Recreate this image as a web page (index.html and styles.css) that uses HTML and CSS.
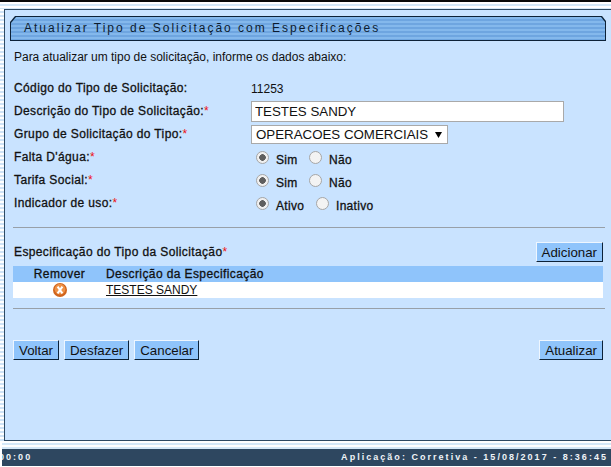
FILE: index.html
```html
<!DOCTYPE html>
<html lang="pt">
<head>
<meta charset="utf-8">
<title>Atualizar Tipo de Solicitação</title>
<link rel="stylesheet" href="styles.css">
</head>
<body>
<div class="topbar"></div>
<div class="stripes-top"></div>
<div class="middle">
  <div class="side"></div>
  <main class="panel">
    <h1 class="title"><span class="title-text">Atualizar Tipo de Solicitação com Especificações</span></h1>
    <p class="intro">Para atualizar um tipo de solicitação, informe os dados abaixo:</p>
    <div class="form">
      <div class="label">Código do Tipo de Solicitação:</div><div class="value">11253</div>
      <div class="label">Descrição do Tipo de Solicitação:<span class="req">*</span></div><div class="value"><input class="text" type="text" value="TESTES SANDY"></div>
      <div class="label">Grupo de Solicitação do Tipo:<span class="req">*</span></div><div class="value"><div class="select">OPERACOES COMERCIAIS<svg class="arrow" width="7" height="6" viewBox="0 0 7 6"><path d="M0 0h7L3.5 6z"/></svg></div></div>
      <div class="label">Falta D'água:<span class="req">*</span></div><div class="value radios"><span class="radio on"></span><span class="opt">Sim</span><span class="radio"></span><span class="opt">Não</span></div>
      <div class="label">Tarifa Social:<span class="req">*</span></div><div class="value radios"><span class="radio on"></span><span class="opt">Sim</span><span class="radio"></span><span class="opt">Não</span></div>
      <div class="label">Indicador de uso:<span class="req">*</span></div><div class="value radios wide"><span class="radio on"></span><span class="opt">Ativo</span><span class="radio"></span><span class="opt">Inativo</span></div>
    </div>
    <hr class="rule first">
    <div class="spec-head">
      <div class="label">Especificação do Tipo da Solicitação<span class="req">*</span></div>
      <button class="btn" type="button">Adicionar</button>
    </div>
    <div class="table">
      <div class="thead"><div class="c1">Remover</div><div class="c2">Descrição da Especificação</div></div>
      <div class="trow">
        <div class="c1"><svg width="14" height="14" viewBox="0 0 14 14"><circle cx="7" cy="7" r="7" fill="#d0641c"/><circle cx="7" cy="6.2" r="5.4" fill="#ee9248"/><path d="M4.6 3.6l4.8 6.8M9.4 3.6l-4.8 6.8" stroke="#fff" stroke-width="2"/></svg></div>
        <div class="c2"><a class="link" href="#">TESTES SANDY</a></div>
      </div>
    </div>
    <hr class="rule second">
    <div class="actions">
      <div class="group"><button class="btn" type="button">Voltar</button><button class="btn" type="button">Desfazer</button><button class="btn" type="button">Cancelar</button></div>
      <button class="btn" type="button">Atualizar</button>
    </div>
  </main>
</div>
<div class="stripes-bottom"></div>
<footer class="footer"><span class="clock">00:00</span><span>Aplicação: Corretiva - 15/08/2017 - 8:36:45</span></footer>
</body>
</html>
```
FILE: styles.css
```css
html, body { margin: 0; padding: 0; }
body {
  width: 611px; height: 467px; overflow: hidden; background: #fff;
  font: 12px "Liberation Sans", Arial, sans-serif; color: #111;
  display: flex; flex-direction: column;
}
.topbar { height: 2px; background: #0a0a0a; flex: none; }
.stripes-top, .stripes-bottom {
  height: 7px; flex: none;
  background: repeating-linear-gradient(#fff 0 2px, #d4e8f8 2px 4px);
}
.stripes-bottom { height: 8px; margin-left: 2px; }
.middle { display: flex; height: 432px; flex: none; }
.side { width: 4px; flex: none; background: repeating-linear-gradient(#fff 0 2px, #cfe3f6 2px 4px); }
.panel {
  flex: 1; background: #c9e3ff; border-left: 1px solid #2e4a63; border-top: 1px solid #2e4a63; border-bottom: 1px solid #2e4a63;
  padding: 6px 5px 0 5px; box-sizing: border-box;
}
.title {
  position: relative; margin: 0; height: 25px; box-sizing: border-box; padding-left: 14px;
  font-weight: 400; font-size: 12px; line-height: 24px; letter-spacing: 2px; color: #0c1c30;
  background: #0d2238;
  clip-path: polygon(5px 0, calc(100% - 4px) 0, 100% 5px, 100% 100%, 0 100%, 0 6px);
}
.title::before {
  content: ""; position: absolute; inset: 1px;
  background: repeating-linear-gradient(#84b8ec 0 2px, #6ea5e0 2px 4px);
  clip-path: polygon(5px 0, calc(100% - 4px) 0, 100% 5px, 100% 100%, 0 100%, 0 6px);
}
.title-text { position: relative; }
.intro { margin: 9px 0 0 4px; line-height: 14px; letter-spacing: -.02px; }
.form {
  display: grid; grid-template-columns: 237px 1fr; grid-auto-rows: 23px;
  margin: 15px 0 0 4px;
}
.label { line-height: 14px; -webkit-text-stroke: .3px #111; letter-spacing: .38px; padding-top: 2px; }
.req { color: #e11; -webkit-text-stroke: 0; }
.value { line-height: 14px; padding-top: 3px; }
.text {
  display: block; margin-top: -4px; width: 313px; height: 21px; box-sizing: border-box;
  border: 1px solid #a9a9a9; background: #fff; padding: 0 3px;
  font: 13.3px "Liberation Sans", Arial, sans-serif; color: #111;
}
.select {
  display: flex; align-items: center; justify-content: space-between; margin-top: -3px; height: 19px; box-sizing: border-box; width: 197px;
  border: 1px solid #a9a9a9; background: #fff; padding: 0 5px 0 4px; font-size: 13.3px; white-space: nowrap;
}
.arrow { flex: none; }
.radios { display: flex; align-items: center; height: 16px; padding-top: 0; margin-top: 1px; }
.radio {
  width: 11px; height: 11px; border-radius: 50%; border: 1px solid #a6a6a6; background: #f3f3f3; flex: none; margin-left: 5px;
}
.radio.on { background: radial-gradient(#5f5f5f 0 3px, #f0f0f0 3.6px); }
.opt { margin-left: 7px; width: 28px; -webkit-text-stroke: .3px #111; letter-spacing: .3px; padding-top: 6px; }
.wide .opt { width: 35px; }
.rule { border: 0; height: 1px; background: #98a0a8; margin: 0; }
.rule.first { margin: 10px 1px 0 3px; }
.rule.second { margin: 10px 1px 0 3px; }
.spec-head { display: flex; justify-content: space-between; align-items: center; margin: 14px 3px 0 4px; height: 20px; }
.spec-head .label { padding: 0; }
.btn {
  height: 20px; padding: 0 5px; box-sizing: border-box; background: #8fc4fb;
  border: 1px solid; border-color: #eef6ff #0d2238 #0d2238 #eef6ff;
  font: 13.3px "Liberation Sans", Arial, sans-serif; color: #111; margin: 0;
}
.table { margin: 4px 3px 0 3px; }
.thead, .trow { display: grid; grid-template-columns: 93px 1fr; height: 16px; line-height: 16px; }
.thead { background: #8fc4fb; -webkit-text-stroke: .3px #111; letter-spacing: .4px; }
.trow { background: #fff; }
.c1 { text-align: center; }
.trow .c1 svg { display: block; margin: 1px auto 0; }
.link { color: #111; }
.actions { display: flex; justify-content: space-between; margin: 31px 3px 0 3px; }
.group { display: flex; gap: 5px; }
.footer {
  height: 17px; margin-left: 2px; flex: none; background: #2e4760; color: #f0f4f8;
  font: bold 9px/17px "Liberation Sans", Arial, sans-serif; letter-spacing: 2.03px;
  display: flex; justify-content: space-between; white-space: nowrap; padding-right: 3px; overflow: hidden;
}
.clock { margin-left: -3px; }
```
